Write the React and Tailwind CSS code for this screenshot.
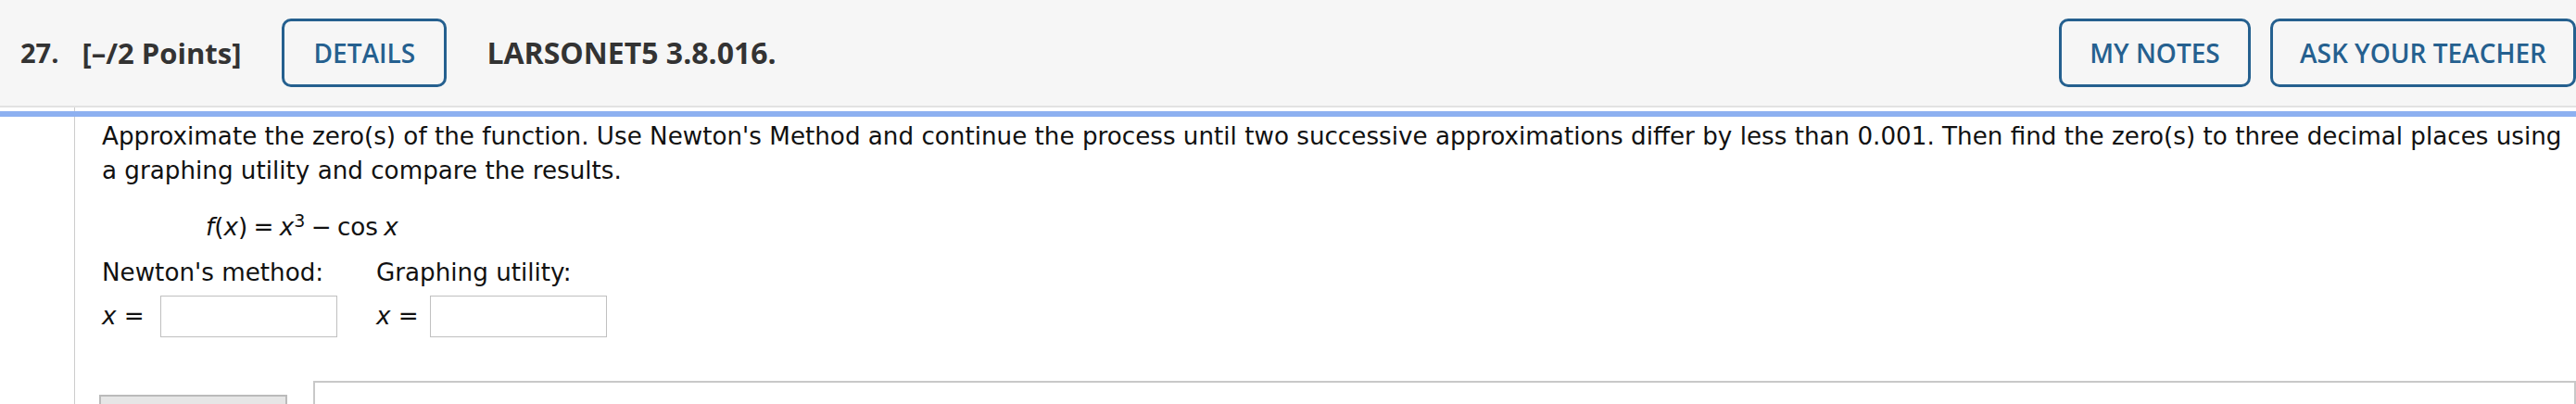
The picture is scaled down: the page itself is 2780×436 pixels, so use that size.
import React from "react";

const head = { fontFamily: '"Open Sans", "Liberation Sans", sans-serif' };
const body = { fontFamily: '"DejaVu Sans", Verdana, sans-serif' };

function OutlineBtn({ children, className = "" }) {
  return (
    <div
      className={
        "flex h-[74px] items-center justify-center rounded-[10px] border-[3px] border-[#25608f] text-[28px] font-semibold text-[#25608f] " +
        className
      }
    >
      {children}
    </div>
  );
}

export default function App() {
  return (
    <div className="w-[2780px] h-[436px] overflow-hidden bg-white" style={body}>
      {/* header */}
      <div
        className="flex h-[116px] items-center border-b-2 border-[#e2e2e2] bg-[#f6f6f6] text-[#333]"
        style={head}
      >
        <span className="ml-[22px] text-[29px] font-bold">27.</span>
        <span className="ml-[25px] text-[31px] font-bold">[–/2 Points]</span>
        <OutlineBtn className="ml-[44px] w-[178px]">DETAILS</OutlineBtn>
        <span className="ml-[43px] text-[32px] font-bold">LARSONET5 3.8.016.</span>
        <div className="ml-auto flex gap-[21px]">
          <OutlineBtn className="w-[207px]">MY NOTES</OutlineBtn>
          <OutlineBtn className="w-[330px]">ASK YOUR TEACHER</OutlineBtn>
        </div>
      </div>
      {/* gap */}
      <div className="flex h-[4px]">
        <div className="w-[80px]" />
        <div className="flex-1 border-l border-[#cccccc]" />
      </div>
      <div className="h-[6px] bg-[#8db0f0]" />
      {/* body */}
      <div className="flex h-[310px]">
        <div className="w-[80px] shrink-0" />
        <div className="flex-1 border-l border-[#cccccc] pl-[29px] pt-[3px] text-[26.2px] leading-[37px] text-[#111]">
          <div className="whitespace-nowrap">
            Approximate the zero(s) of the function. Use Newton's Method and continue the process until two successive approximations differ by less than 0.001. Then find the zero(s) to three decimal places using
          </div>
          <div className="whitespace-nowrap">a graphing utility and compare the results.</div>
          <div className="mt-[24px] ml-[112px] whitespace-nowrap [word-spacing:-2px]">
            <i>f</i>(<i>x</i>) = <i>x</i>
            <sup className="text-[19px]">3</sup> − cos <i>x</i>
          </div>
          <div className="mt-[12px] flex">
            <div className="w-[296px]">
              <div>Newton's method:</div>
              <div className="mt-[6px] flex items-center">
                <span className="w-[63px]">
                  <i>x</i> =
                </span>
                <div className="h-[45px] w-[191px] border border-[#c0c0c0] bg-white" />
              </div>
            </div>
            <div>
              <div>Graphing utility:</div>
              <div className="mt-[6px] flex items-center">
                <span className="w-[58px]">
                  <i>x</i> =
                </span>
                <div className="h-[45px] w-[191px] border border-[#c0c0c0] bg-white" />
              </div>
            </div>
          </div>
          <div className="mt-[47px] flex items-start">
            <div className="ml-[-3px] mt-[15px] h-[40px] w-[203px] border-2 border-[#bbbbbb] bg-[#e6e6e6]" />
            <div className="ml-[28px] h-[60px] flex-1 border-2 border-[#c8c8c8] bg-white" />
          </div>
        </div>
      </div>
    </div>
  );
}
